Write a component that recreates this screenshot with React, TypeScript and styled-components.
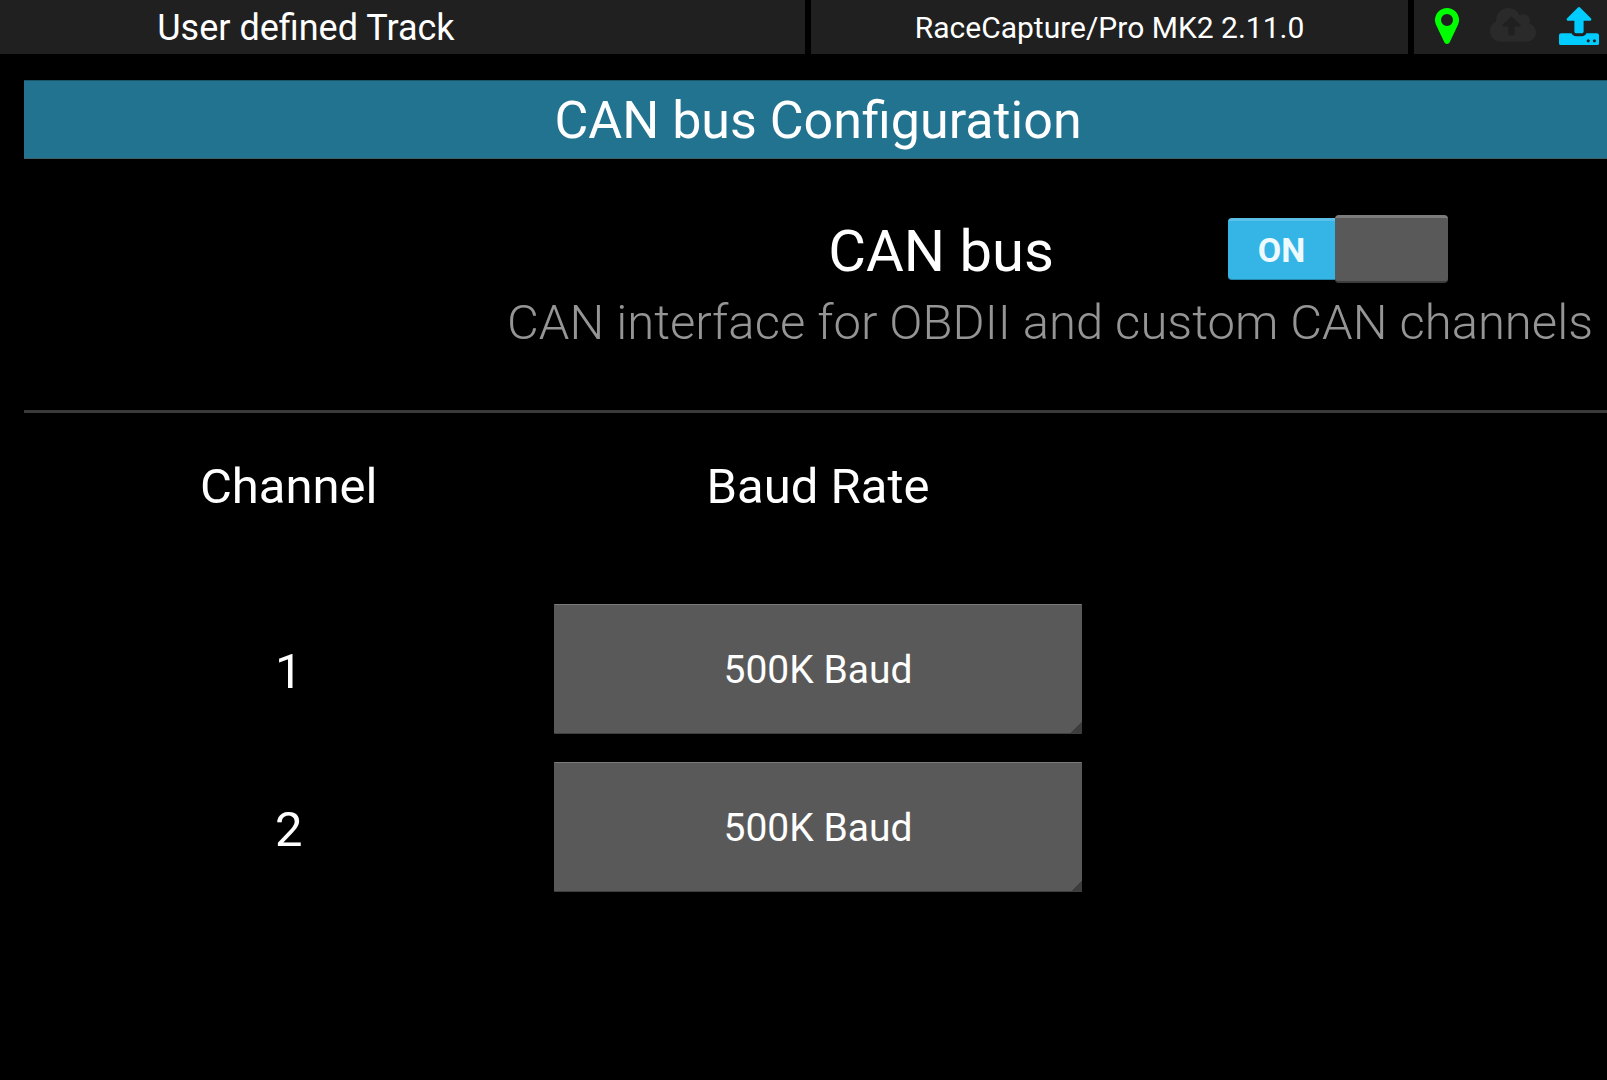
import React, { useState } from "react";
import styled, { createGlobalStyle } from "styled-components";

const GlobalStyle = createGlobalStyle`
  *, *::before, *::after { box-sizing: border-box; }
  body {
    margin: 0;
    background: #000;
    color: #fff;
    font-family: Roboto, "Liberation Sans", sans-serif;
  }
`;

const Shell = styled.div`
  min-height: 100vh;
  overflow: hidden;
`;

/* The screen runs slightly past the right edge of the window. */
const Screen = styled.div`
  margin-right: -5px;
`;

const StatusBar = styled.header`
  display: grid;
  grid-template-columns: 805fr 597fr 198fr;
  gap: 6px;
  height: 54px;
`;

const StatusPanel = styled.div`
  display: flex;
  align-items: center;
  justify-content: center;
  padding-top: 2px;
  background: #202020;
  line-height: 48px;
  white-space: nowrap;
`;

const TrackPanel = styled(StatusPanel)`
  padding-right: 24%;
  font-size: 36px;
`;

const DevicePanel = styled(StatusPanel)`
  font-size: 30px;
`;

const IconPanel = styled(StatusPanel)`
  display: grid;
  grid-template-columns: repeat(3, 1fr);
  justify-items: center;
  padding: 0 0 2px;
`;

const StatusIcon = styled.svg<{ $color: string; $width: number }>`
  display: block;
  width: ${(p) => p.$width}px;
  fill: ${(p) => p.$color};
`;

const Content = styled.main`
  padding: 26px 0 0 24px;
`;

const Title = styled.h1`
  margin: 0;
  height: 79px;
  border-top: 1px solid #1b566b;
  border-bottom: 1px solid #41606c;
  background: #22738f;
  font-size: 52px;
  font-weight: 400;
  line-height: 80px;
  text-align: center;
`;

const Setting = styled.section`
  padding-top: 52px;
  height: 254px;
  border-bottom: 3px solid #3a3a3a;
`;

const SettingRow = styled.div`
  display: grid;
  grid-template-columns: 500fr 155fr 345fr;
  align-items: center;
  height: 76px;
`;

const SettingLabel = styled.label`
  grid-column: 2;
  justify-self: center;
  padding-top: 4px;
  font-size: 58px;
  line-height: 72px;
  white-space: nowrap;
`;

const SettingHint = styled.p`
  margin: 0;
  padding-right: 19px;
  color: #959595;
  font-size: 49px;
  font-weight: 300;
  line-height: 72px;
  text-align: right;
  white-space: nowrap;
`;

const Switch = styled.span<{ $on: boolean }>`
  position: relative;
  display: flex;
  flex-direction: ${(p) => (p.$on ? "row" : "row-reverse")};
  align-items: center;
  justify-self: center;
  width: 220px;
  height: 68px;
`;

const SwitchInput = styled.input`
  position: absolute;
  inset: 0;
  width: 100%;
  height: 100%;
  margin: 0;
  opacity: 0;
  cursor: pointer;
`;

const SwitchTrack = styled.span<{ $on: boolean }>`
  flex: 1;
  height: 62px;
  border-top: 3px solid ${(p) => (p.$on ? "#5bc0e8" : "#555")};
  border-bottom: 1px solid ${(p) => (p.$on ? "#2789ad" : "#222")};
  border-radius: 4px 0 0 4px;
  background: ${(p) => (p.$on ? "#34b5e5" : "#333")};
  color: #effaff;
  font-size: 34px;
  font-weight: 700;
  line-height: 58px;
  text-align: center;
`;

const SwitchThumb = styled.span`
  width: 113px;
  height: 68px;
  border-top: 3px solid #7c7c7c;
  border-bottom: 2px solid #3c3c3c;
  border-radius: 4px;
  background: #595959;
`;

const ChannelTable = styled.table`
  width: 100%;
  table-layout: fixed;
  border-collapse: collapse;
  text-align: center;
`;

const HeadCell = styled.th`
  height: 177px;
  padding: 37px 0 0;
  font-size: 49px;
  font-weight: 400;
  line-height: 74px;
  vertical-align: top;
`;

const Cell = styled.td`
  height: 158px;
  padding: 0;
`;

const NumberCell = styled(Cell)`
  padding-top: 6px;
  font-size: 49px;
  line-height: 74px;
`;

const SelectBox = styled.div`
  position: relative;
  height: 130px;
  margin: 0 1px;

  &::after {
    content: "";
    position: absolute;
    right: 0;
    bottom: 1px;
    width: 11px;
    height: 11px;
    background: linear-gradient(135deg, transparent 50%, #3d3d3d 50%);
    pointer-events: none;
  }
`;

const Select = styled.select`
  appearance: none;
  display: block;
  width: 100%;
  height: 100%;
  padding: 2px 0 0;
  border: 0 solid #333;
  border-top: 1px solid #7a7a7a;
  border-bottom: 1px solid #3f3f3f;
  border-radius: 1px;
  background: #595959;
  color: #fff;
  font-family: inherit;
  font-size: 39px;
  text-align: center;
  text-align-last: center;
`;

const rates = ["100K Baud", "125K Baud", "250K Baud", "500K Baud", "1M Baud"];

function MarkerIcon() {
  return (
    <StatusIcon $color="#00ff00" $width={24} viewBox="0 128 1024 1536" aria-label="GPS">
      <path d="M768 640q0-106-75-181t-181-75-181 75-75 181 75 181 181 75 181-75 75-181zm256 0q0 109-33 179l-364 774q-16 33-47.5 52t-67.5 19-67.5-19-46.5-52l-365-774q-33-70-33-179 0-212 150-362t362-150 362 150 150 362z" />
    </StatusIcon>
  );
}

function CloudIcon() {
  return (
    <StatusIcon $color="#2a2a2a" $width={46} viewBox="0 128 1920 1536" aria-label="Cloud upload">
      <path d="M1280 864q0-14-9-23l-352-352q-9-9-23-9t-23 9l-351 351q-10 12-10 24 0 14 9 23t23 9h224v352q0 13 9.500 22.500t22.500 9.500h192q13 0 22.500-9.500t9.500-22.500v-352h224q13 0 22.500-9.500t9.500-22.500zm640 288q0 159-112.500 271.500t-271.500 112.500h-1088q-185 0-316.500-131.500t-131.500-316.500q0-130 70-240t188-165q-2-30-2-43 0-212 150-362t362-150q156 0 285.500 87t188.500 231q71-62 166-62 106 0 181 75t75 181q0 76-41 138 130 31 213.500 135.500t83.500 238.500z" />
    </StatusIcon>
  );
}

function UploadIcon() {
  return (
    <StatusIcon $color="#00ccff" $width={40} viewBox="0 64 1664 1600" aria-label="Telemetry">
      <path d="M1280 1472q0-26-19-45t-45-19-45 19-19 45 19 45 45 19 45-19 19-45zm256 0q0-26-19-45t-45-19-45 19-19 45 19 45 45 19 45-19 19-45zm128-224v320q0 40-28 68t-68 28h-1472q-40 0-68-28t-28-68v-320q0-40 28-68t68-28h427q21 56 70.500 92t110.500 36h256q61 0 110.500-36t70.500-92h427q40 0 68 28t28 68zm-325-648q-17 40-59 40h-256v448q0 26-19 45t-45 19h-256q-26 0-45-19t-19-45v-448h-256q-42 0-59-40-17-39 14-69l448-448q18-19 45-19t45 19l448 448q31 30 14 69z" />
    </StatusIcon>
  );
}

export default function App() {
  const [enabled, setEnabled] = useState(true);
  const [baud, setBaud] = useState(["500K Baud", "500K Baud"]);

  return (
    <Shell>
      <GlobalStyle />
      <Screen>
        <StatusBar>
          <TrackPanel>User defined Track</TrackPanel>
          <DevicePanel>RaceCapture/Pro MK2 2.11.0</DevicePanel>
          <IconPanel>
            <MarkerIcon />
            <CloudIcon />
            <UploadIcon />
          </IconPanel>
        </StatusBar>
        <Content>
          <Title>CAN bus Configuration</Title>
          <Setting>
            <SettingRow>
              <SettingLabel htmlFor="can-enabled">CAN bus</SettingLabel>
              <Switch $on={enabled}>
                <SwitchTrack $on={enabled}>{enabled ? "ON" : "OFF"}</SwitchTrack>
                <SwitchThumb />
                <SwitchInput
                  id="can-enabled"
                  type="checkbox"
                  role="switch"
                  checked={enabled}
                  onChange={(e) => setEnabled(e.target.checked)}
                />
              </Switch>
            </SettingRow>
            <SettingHint>CAN interface for OBDII and custom CAN channels</SettingHint>
          </Setting>
          <ChannelTable>
            <thead>
              <tr>
                <HeadCell scope="col" id="col-channel">Channel</HeadCell>
                <HeadCell scope="col" id="col-baud">Baud Rate</HeadCell>
                <HeadCell as="td" />
              </tr>
            </thead>
            <tbody>
              {baud.map((rate, i) => (
                <tr key={i}>
                  <NumberCell id={`channel-${i + 1}`}>{i + 1}</NumberCell>
                  <Cell>
                    <SelectBox>
                      <Select
                        aria-labelledby={`col-baud channel-${i + 1}`}
                        value={rate}
                        onChange={(e) =>
                          setBaud(baud.map((b, n) => (n === i ? e.target.value : b)))
                        }
                      >
                        {rates.map((r) => (
                          <option key={r}>{r}</option>
                        ))}
                      </Select>
                    </SelectBox>
                  </Cell>
                  <Cell />
                </tr>
              ))}
            </tbody>
          </ChannelTable>
        </Content>
      </Screen>
    </Shell>
  );
}
